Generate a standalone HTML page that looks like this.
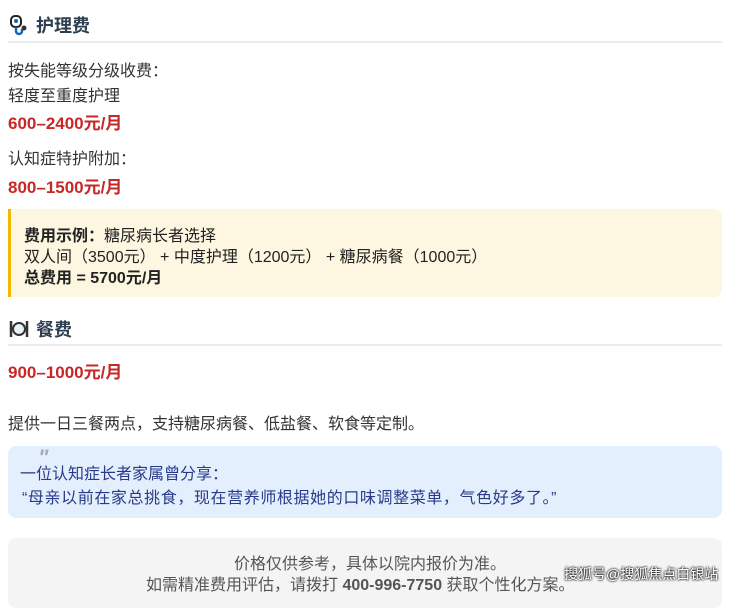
<!DOCTYPE html>
<html><head><meta charset="utf-8"><style>
body{margin:0;background:#fff;font-family:"Liberation Sans","Noto Sans CJK SC",sans-serif;color:#333;font-size:16px;width:740px;height:590px;overflow:hidden;position:relative}
.a{position:absolute;left:8px;white-space:nowrap}
h3{position:absolute;left:8px;margin:0;font-size:18px;color:#2c3e50;font-weight:bold;display:flex;align-items:center;gap:6px}
.hr{position:absolute;left:8px;width:714px;height:2px;background:#ececec}
.red{color:#c62828;font-weight:bold;font-size:17px}
.box{position:absolute;left:8px;width:714px;border-radius:8px}
</style></head><body>
<h3 style="top:12px"><svg width="22" height="22" viewBox="0 0 22 22"><rect x="3" y="2" width="10" height="11" rx="4" fill="#fff" stroke="#222" stroke-width="2"/><circle cx="8" cy="7" r="2" fill="#1565c0"/><path d="M8 13v4a3 3 0 0 0 6 0v-2" stroke="#1565c0" stroke-width="2.5" fill="none"/><circle cx="16" cy="14" r="2.5" fill="#333"/></svg>护理费</h3>
<div class="hr" style="top:41px"></div>
<div class="a" style="top:57px">按失能等级分级收费：</div>
<div class="a" style="top:82px">轻度至重度护理</div>
<div class="a red" style="top:109px">600–2400元/月</div>
<div class="a" style="top:145px">认知症特护附加：</div>
<div class="a red" style="top:173px">800–1500元/月</div>
<div class="box" style="top:209px;height:88px;background:#fdf6e0;border-left:3px solid #f5b800;border-radius:0 8px 8px 0;width:711px"></div>
<div class="a" style="top:222px;left:24px;color:#222"><b>费用示例：</b>糖尿病长者选择</div>
<div class="a" style="top:243px;left:24px;color:#222">双人间（3500元） + 中度护理（1200元） + 糖尿病餐（1000元）</div>
<div class="a" style="top:264px;left:24px;color:#222"><b>总费用 = 5700元/月</b></div>
<h3 style="top:316px"><svg width="22" height="22" viewBox="0 0 22 22"><path d="M3 3v16M19 3v16" stroke="#333" stroke-width="2.5"/><circle cx="11" cy="11" r="6" fill="#e8f4fa" stroke="#333" stroke-width="2"/></svg>餐费</h3>
<div class="hr" style="top:344px"></div>
<div class="a red" style="top:358px">900–1000元/月</div>
<div class="a" style="top:410px">提供一日三餐两点，支持糖尿病餐、低盐餐、软食等定制。</div>
<div class="box" style="top:446px;height:72px;background:#e3effc"></div>
<div class="a" style="top:445px;left:38px;color:#aab;font-size:22px;font-style:italic;font-weight:bold">"</div>
<div class="a" style="top:460px;left:20px;color:#2a3a8a">一位认知症长者家属曾分享：</div>
<div class="a" style="top:484px;left:22px;color:#2a3a8a;letter-spacing:0.6px">“母亲以前在家总挑食，现在营养师根据她的口味调整菜单，气色好多了。”</div>
<div class="box" style="top:538px;height:70px;background:#f4f4f4"></div>
<div class="a" style="top:550px;left:0;width:740px;text-align:center;color:#555">价格仅供参考，具体以院内报价为准。</div>
<div class="a" style="top:571px;left:146px;color:#555">如需精准费用评估，请拨打 <b>400-996-7750</b> 获取个性化方案。</div>
<div class="a" style="top:564px;left:564px;color:#fff;font-size:14px;text-shadow:0 0 2px #000,0 0 2px #000">搜狐号@搜狐焦点白银站</div>
</body></html>
